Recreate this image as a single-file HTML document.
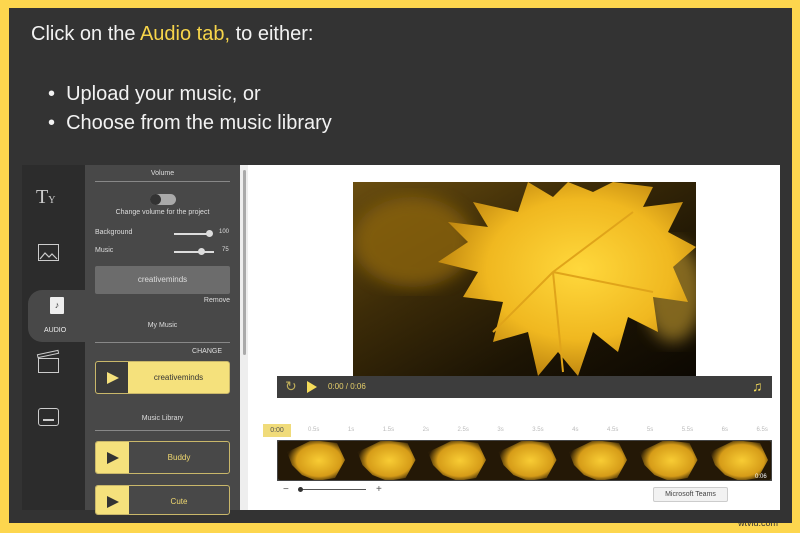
<!DOCTYPE html>
<html><head><meta charset="utf-8"><style>
*{margin:0;padding:0;box-sizing:border-box}
body{width:800px;height:533px;background:#fdd64e;position:relative;overflow:hidden;font-family:"Liberation Sans",sans-serif}
.dark{position:absolute;left:9px;top:8px;width:783px;height:515px;background:#333}
.t{position:absolute;color:#f2f2f2;font-size:20px;white-space:nowrap}
.y{color:#f7d54a}
.abs{position:absolute}
.side{left:22px;top:165px;width:64px;height:345px;background:#2c2c2c}
.panel{left:85px;top:165px;width:155px;height:345px;background:#484848;color:#ddd;font-size:7px;text-align:center}
.hr{position:absolute;left:10px;width:135px;height:1px;background:#888}
.btn{position:absolute;left:10px;width:135px;height:33px;border:1px solid #c9b76a;border-radius:3px;overflow:hidden}
</style></head><body>
<div class="dark"></div>
<div class="t" style="left:31px;top:23px">Click on the <span class="y">Audio tab,</span> to either:</div>
<div class="t" style="left:48px;top:83px">•&nbsp; Upload your music, or</div>
<div class="t" style="left:48px;top:112px">•&nbsp; Choose from the music library</div>

<div class="abs side"></div>
<div class="abs" style="left:28px;top:290px;width:60px;height:52px;background:#484848;border-radius:14px 0 0 14px"></div>
<div class="abs" style="left:36px;top:186px;color:#ccc;font-family:'Liberation Serif',serif;font-size:20px">T<span style="font-size:10px">Y</span></div>
<div class="abs" style="left:38px;top:244px;width:21px;height:17px;border:1.5px solid #ccc"></div>
<svg class="abs" style="left:39px;top:250px" width="19" height="10"><path d="M1 9 L6 3 L10 7 L13 4 L18 9" fill="none" stroke="#ccc" stroke-width="1.2"/></svg>
<div class="abs" style="left:50px;top:297px;width:14px;height:17px;background:#eee;border-radius:1px;color:#333;font-size:9px;text-align:center;line-height:17px">♪</div>
<div class="abs" style="left:44px;top:327px;color:#eee;font-size:7px">AUDIO</div>
<div class="abs" style="left:38px;top:358px;width:21px;height:15px;border:1.5px solid #ccc"></div>
<div class="abs" style="left:37px;top:352px;width:22px;height:4px;border:1px solid #ccc;transform:rotate(-12deg)"></div>
<div class="abs" style="left:38px;top:408px;width:21px;height:18px;border:1.5px solid #ccc;border-radius:3px"></div>
<div class="abs" style="left:43px;top:419px;width:11px;height:1.5px;background:#ccc"></div>

<div class="abs panel">
<div class="abs" style="left:0;width:155px;top:5px">Volume</div>
<div class="hr" style="top:16px"></div>
<div class="abs" style="left:65px;top:29px;width:26px;height:11px;border-radius:6px;background:#aaa"><div style="width:11px;height:11px;border-radius:6px;background:#333"></div></div>
<div class="abs" style="left:0;width:155px;top:44px">Change volume for the project</div>
<div class="abs" style="left:10px;top:64px;text-align:left">Background</div>
<div class="abs" style="left:10px;top:82px;text-align:left">Music</div>
<div class="abs" style="left:89px;top:68px;width:38px;height:2px;background:#ddd"></div>
<div class="abs" style="left:121px;top:65px;width:7px;height:7px;border-radius:4px;background:#ddd"></div>
<div class="abs" style="left:134px;top:64px;font-size:6px">100</div>
<div class="abs" style="left:89px;top:86px;width:40px;height:2px;background:#ddd"></div>
<div class="abs" style="left:113px;top:83px;width:7px;height:7px;border-radius:4px;background:#ddd"></div>
<div class="abs" style="left:137px;top:82px;font-size:6px">75</div>
<div class="abs" style="left:10px;top:101px;width:135px;height:28px;background:#6c6c6c;border-radius:2px;line-height:28px;font-size:8px">creativeminds</div>
<div class="abs" style="right:10px;top:132px">Remove</div>
<div class="abs" style="left:0;width:155px;top:157px">My Music</div>
<div class="hr" style="top:177px"></div>
<div class="abs" style="right:18px;top:183px">CHANGE</div>
<div class="btn" style="top:196px;background:#f5e17c"><div style="width:32px;height:33px;background:#3a3a3a;float:left"><div style="margin:10px 0 0 11px;border-left:12px solid #f5e17c;border-top:6px solid transparent;border-bottom:6px solid transparent;width:0"></div></div><div style="line-height:31px;color:#333;font-size:8px">creativeminds</div></div>
<div class="abs" style="left:0;width:155px;top:250px">Music Library</div>
<div class="hr" style="top:265px"></div>
<div class="btn" style="top:276px;background:#484848"><div style="width:33px;height:33px;background:#f5e17c;float:left"><div style="margin:10px 0 0 11px;border-left:12px solid #333;border-top:6px solid transparent;border-bottom:6px solid transparent;width:0"></div></div><div style="line-height:31px;color:#f0d870;font-size:8px">Buddy</div></div>
<div class="btn" style="top:320px;background:#484848;height:30px"><div style="width:33px;height:33px;background:#f5e17c;float:left"><div style="margin:10px 0 0 11px;border-left:12px solid #333;border-top:6px solid transparent;border-bottom:6px solid transparent;width:0"></div></div><div style="line-height:31px;color:#f0d870;font-size:8px">Cute</div></div>
</div>
<div class="abs" style="left:240px;top:165px;width:8px;height:345px;background:#eee"></div>
<div class="abs" style="left:243px;top:170px;width:3px;height:185px;background:#aaa;border-radius:2px"></div>
<div class="abs" style="left:248px;top:165px;width:532px;height:345px;background:#fff"></div>

<svg class="abs" style="left:353px;top:182px" width="343" height="194" viewBox="0 0 343 194">
<defs>
<linearGradient id="b" x1="0" y1="0" x2="1" y2="1"><stop offset="0" stop-color="#6a4e10"/><stop offset="0.35" stop-color="#3d2c08"/><stop offset="0.7" stop-color="#1c1404"/><stop offset="1" stop-color="#0c0802"/></linearGradient>
<radialGradient id="g" cx="0.55" cy="0.45" r="0.6"><stop offset="0" stop-color="#ffd83c"/><stop offset="0.6" stop-color="#f0b820"/><stop offset="1" stop-color="#b57c0c"/></radialGradient>
<filter id="bl"><feGaussianBlur stdDeviation="8"/></filter>
</defs>
<rect width="343" height="194" fill="url(#b)"/>
<ellipse cx="60" cy="60" rx="60" ry="45" fill="#8a6410" filter="url(#bl)" opacity=".8"/>
<ellipse cx="320" cy="110" rx="30" ry="50" fill="#c9a030" filter="url(#bl)" opacity=".6"/>
<path d="M95 40 L135 45 L120 20 L165 30 L175 0 L200 15 L215 0 L240 10 L260 0 L300 5 L290 25 L330 20 L315 50 L343 65 L320 85 L335 120 L300 115 L305 150 L275 135 L265 170 L240 150 L225 194 L205 170 L185 194 L175 150 L140 160 L150 120 L110 115 L125 90 L85 80 L115 60 Z" fill="url(#g)"/>
<path d="M200 90 L140 150 M200 90 L280 30 M200 90 L300 110 M200 90 L210 190" stroke="#e0a41a" stroke-width="2"/>
</svg>
<div class="abs" style="left:277px;top:376px;width:495px;height:22px;background:#3d3d3d"></div>
<div class="abs" style="left:285px;top:378px;color:#bfae5a;font-size:14px">↻</div>
<div class="abs" style="left:307px;top:381px;border-left:10px solid #f5dc5a;border-top:6px solid transparent;border-bottom:6px solid transparent"></div>
<div class="abs" style="left:328px;top:382px;color:#e6cf6a;font-size:8px">0:00 / 0:06</div>
<div class="abs" style="left:752px;top:378px;color:#f5dc5a;font-size:14px">♫</div>

<div class="abs" style="left:263px;top:424px;width:28px;height:13px;background:#f0db7a;font-size:7px;color:#555;text-align:center;line-height:13px">0:00</div>
<div class="abs" style="left:308px;top:427px;width:460px;display:flex;justify-content:space-between;font-size:6px;color:#bbb"><span>0.5s</span><span>1s</span><span>1.5s</span><span>2s</span><span>2.5s</span><span>3s</span><span>3.5s</span><span>4s</span><span>4.5s</span><span>5s</span><span>5.5s</span><span>6s</span><span>6.5s</span></div>
<svg class="abs" style="left:277px;top:440px" width="495" height="41">
<defs><radialGradient id="f" cx="0.55" cy="0.5" r="0.55"><stop offset="0" stop-color="#f8cc34"/><stop offset=".7" stop-color="#d69c18"/><stop offset="1" stop-color="#2a1c06"/></radialGradient>
<pattern id="p" width="70.5" height="41" patternUnits="userSpaceOnUse"><rect width="70.5" height="41" fill="#241806"/><path d="M10 12 L25 5 L35 0 L60 3 L68 20 L58 38 L40 41 L25 35 L15 25 Z" fill="url(#f)"/></pattern></defs>
<rect width="495" height="41" rx="3" fill="url(#p)" stroke="#444" stroke-width="2"/>
<text x="478" y="38" font-size="6" fill="#fff" font-family="Liberation Sans">0:06</text></svg>
<div class="abs" style="left:283px;top:484px;font-size:10px;color:#555">−</div>
<div class="abs" style="left:300px;top:489px;width:66px;height:1px;background:#555"></div>
<div class="abs" style="left:298px;top:487px;width:5px;height:5px;border-radius:3px;background:#333"></div>
<div class="abs" style="left:376px;top:484px;font-size:10px;color:#555">+</div>
<div class="abs" style="left:653px;top:487px;width:75px;height:15px;background:#f2f2f2;border:1px solid #ccc;border-radius:2px;font-size:7px;color:#444;text-align:center;line-height:13px">Microsoft Teams</div>
<div class="abs" style="left:738px;top:518px;font-size:9px;color:#333">wtvid.com</div>
</body></html>
